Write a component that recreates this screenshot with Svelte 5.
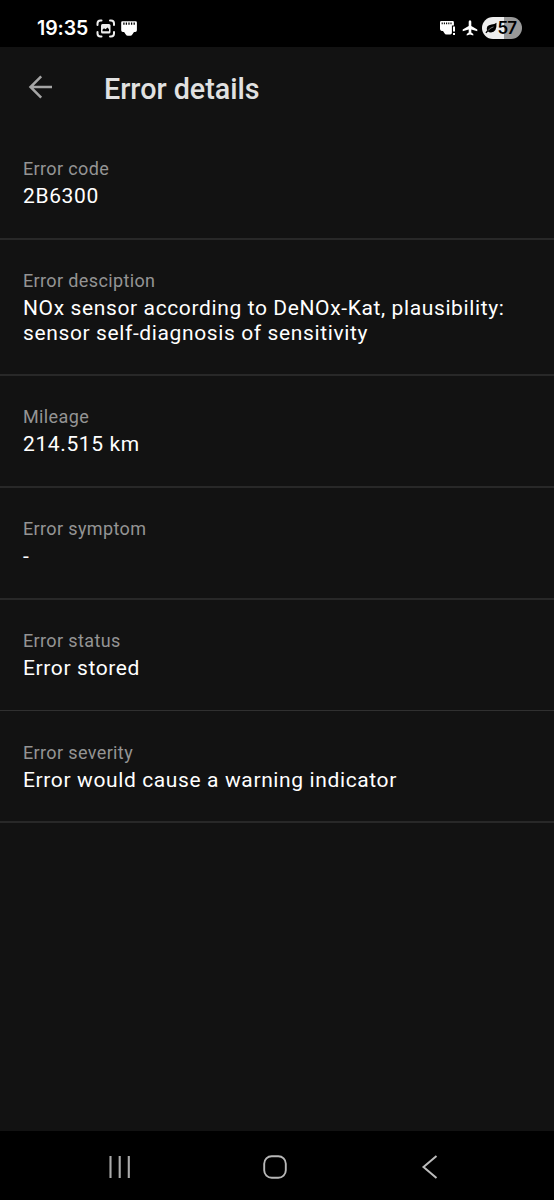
<script>
  const rows = [
    ['Error code', ['2B6300']],
    ['Error desciption', ['NOx sensor according to DeNOx-Kat, plausibility:', 'sensor self-diagnosis of sensitivity']],
    ['Mileage', ['214.515 km']],
    ['Error symptom', ['-']],
    ['Error status', ['Error stored']],
    ['Error severity', ['Error would cause a warning indicator']]
  ];
</script>

<div class="screen">
  <div class="status">
    <span class="time">19:35</span>
    <svg class="capture" width="20" height="20" viewBox="0 0 20 20" fill="none" stroke="#eee" stroke-width="2" stroke-linecap="round">
      <path d="M1.500 6V4.500Q1.500 1.500 4.500 1.500H5.500M14 1.500h1Q18 1.500 18 4.500V6M18 13v1.500q0 3-3 3h-1M5.500 17.500h-1q-3 0-3-3V13" />
      <rect x="5" y="5" width="9.500" height="9.500" rx="1.500" fill="#eee" stroke="none" />
      <path d="M6.500 12.200V10.700L8 9.300l1.500 1L11.500 8.500l1.500 1.700v2z" fill="#000" stroke="none" />
    </svg>
    <svg class="port" width="18" height="18" viewBox="0 0 18 18">
      <path d="M2.200 1.200h13.500q1.200 0 1.200 1.200V10.300q0 1.700-1.700 1.700h-1.200l-1.500 2.200q-1 1.500-2.200 1.500H7.800q-1.200 0-2.200-1.500L4.100 12H2.900Q1.200 12 1.200 10.300V2.400Q1.200 1.200 2.200 1.200z" fill="#fff" />
      <path d="M3.900 2.500v2.300M6.400 2.500v2.300M9 2.500v2.300M11.600 2.500v2.300M14.200 2.500v2.300" stroke="#000" stroke-width="1.300" />
    </svg>
    <span class="grow"></span>
    <svg class="alert" width="18" height="18" viewBox="0 0 18 18">
      <path d="M2.200 1h11.500q1.200 0 1.200 1.200V5.500h-2v7.200q0 1.800-1.600 1.800H7.500q-1.500 0-2.200-1.500L4 11H2.700Q1 10.700 1 9V2.200Q1 1 2.200 1z" fill="#fff" />
      <path d="M3.200 2.500v1.800M5.400 2.500v1.800M7.600 2.500v1.800M9.800 2.500v1.800M12 2.500v1.800" stroke="#000" stroke-width="1.100" />
      <path d="M15 6.500v5M15 13v2" stroke="#fff" stroke-width="2" />
    </svg>
    <svg class="plane" width="16" height="16" viewBox="0 0 16 16">
      <path d="M8 .3q1.300 0 1.300 1.500v4.100l6 3.700v1.700l-6-1.900v3.200l2 1.500v1.300L8 14.500l-3.300.9v-1.300l2-1.500V9.400l-6 1.900V9.600l6-3.700V1.800Q6.700.3 8 .3z" fill="#fff" />
    </svg>
    <div class="battery">
      <svg width="12" height="12" viewBox="0 0 12 12">
        <path d="M11.500.8Q12 10.500 6 10.500q-2 0-3-1L1.400 11.200.4 10.500 2 8.600Q.7 3.200 6.500 2.500 9.500 2.300 11.500.8z" fill="#000" />
        <path d="M3 8.600Q5 5.700 8.500 4.900" fill="none" stroke="#eee" stroke-width=".5" />
      </svg>
      <span>57</span>
    </div>
  </div>
  <header>
    <svg width="24" height="24" viewBox="0 0 24 24" fill="none" stroke="#a5a5a5" stroke-width="2.500">
      <path d="M24 12H2.500M13.200 1.300 2.500 12l10.700 10.700" />
    </svg>
    <h1>Error details</h1>
  </header>
  <main>
    {#each rows as [label, lines]}
      <section>
        <div class="label">{label}</div>
        {#each lines as line}<div class="value">{line}</div>{/each}
      </section>
    {/each}
  </main>
  <nav>
    <svg width="24" height="24" viewBox="0 0 24 24"><path d="M2.500 1v22M11.700 1v22M20.800 1v22" stroke="#aaa" stroke-width="2.100" /></svg>
    <svg width="24" height="24" viewBox="0 0 24 24"><rect x="1.200" y="1.200" width="21.600" height="21.600" rx="7.500" fill="none" stroke="#b8b8b8" stroke-width="1.900" /></svg>
    <svg width="24" height="24" viewBox="0 0 24 24"><path d="M18.500 1 5.500 12l13 11" fill="none" stroke="#bcbcbc" stroke-width="2" /></svg>
  </nav>
</div>

<style>
  :global(body) { margin: 0; background: #121212; }
  .screen { width: 554px; height: 1200px; display: flex; flex-direction: column; background: #121212; font-family: Roboto, sans-serif; overflow: hidden; }
  .status { height: 47px; box-sizing: border-box; flex: none; background: #000; display: flex; align-items: center; padding: 9px 32px 0 37px; color: #fff; }
  .time { font: 600 19.500px/24px Inter, sans-serif; width: 59px; letter-spacing: -.1px; white-space: nowrap; }
  .capture { margin: 1px 4px 0 0; }
  .port { margin-top: 2px; }
  .grow { flex: 1; }
  .alert { margin: 2px 5.500px 0 0; }
  .plane { margin-right: 4px; }
  .battery { box-sizing: border-box; width: 40px; height: 22px; border-radius: 11px; background: linear-gradient(90deg, #eee 56%, #999 56%); display: flex; align-items: center; padding-left: 2.500px; gap: 1px; color: #000; }
  .battery span { font: 600 17px/22px Inter, sans-serif; letter-spacing: -.9px; }
  header { height: 81px; flex: none; box-sizing: border-box; display: flex; align-items: center; padding: 2px 0 0 28px; }
  header svg { margin-bottom: 3px; }
  h1 { margin: 0 0 0 52px; font-size: 28.700px; line-height: 34px; font-weight: 500; color: #e1e1e1; }
  main { flex: 1; }
  section { box-sizing: border-box; height: 112px; padding: 29px 23px 0; border-bottom: 2px solid #282828; }
  section:nth-child(2) { height: 136px; }
  section:nth-child(5) { height: 111px; border-bottom: 1px solid #303030; }
  section:nth-child(6) { padding-top: 30px; }
  .label { font-size: 18px; line-height: 24px; color: #949494; letter-spacing: .37px; }
  .value { font-size: 21px; line-height: 24.500px; color: #fff; letter-spacing: .62px; white-space: nowrap; }
  .label + .value { margin-top: 3px; }
  nav { height: 69px; flex: none; background: #000; display: flex; justify-content: space-between; align-items: center; padding: 2px 112px 0 107.500px; box-sizing: border-box; }
</style>
